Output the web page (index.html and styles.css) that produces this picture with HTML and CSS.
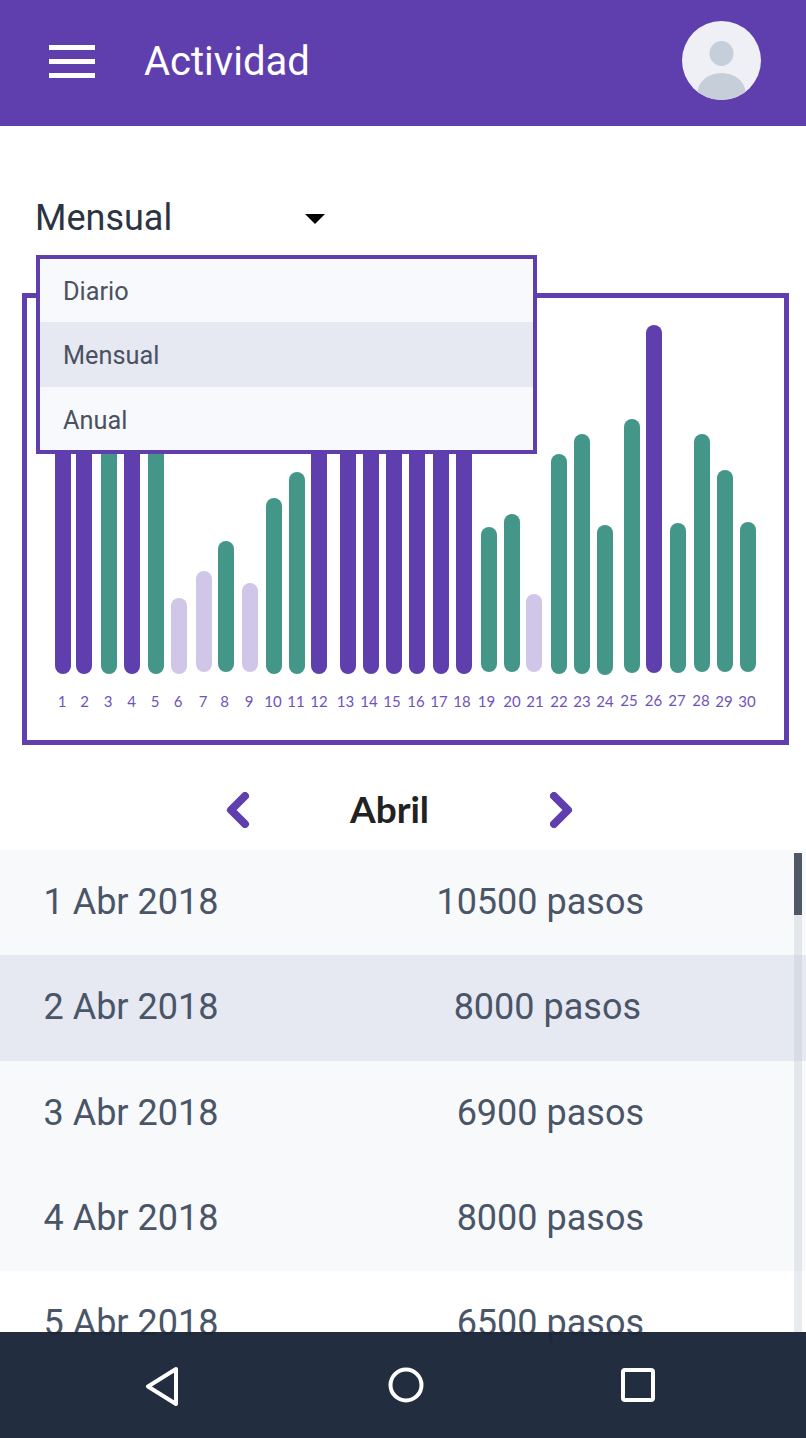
FILE: index.html
```html
<!DOCTYPE html>
<html lang="es">
<head>
  <meta charset="UTF-8">
  <title>Actividad</title>
  <meta name="viewport" content="width=device-width, initial-scale=1.0">
  <link rel="stylesheet" href="styles.css">
</head>
<body>

<div class="screen">
  <header class="topbar">
    <div class="menu-icon"><span></span><span></span><span></span></div>
    <h1 class="topbar-title">Actividad</h1>
    <svg class="avatar" width="79" height="79" viewBox="0 0 79 79">
      <clipPath id="avatarClip"><circle cx="39.5" cy="39.5" r="39.5"/></clipPath>
      <circle cx="39.5" cy="39.5" r="39.5" fill="#eef0f5"/>
      <g clip-path="url(#avatarClip)" fill="#c5ced9">
        <ellipse cx="39.5" cy="32.5" rx="12" ry="12.5"/>
        <ellipse cx="39.5" cy="72" rx="24" ry="20"/>
      </g>
    </svg>
  </header>

  <div class="period">
    <span class="period-value">Mensual</span>
    <span class="caret"></span>
    <ul class="period-menu">
      <li>Diario</li>
      <li class="selected">Mensual</li>
      <li>Anual</li>
    </ul>
  </div>

  <div class="chart">
    <svg class="chart-svg" width="757" height="442" viewBox="27 298 757 442">
      <g class="purple">
        <rect x="55" y="400" width="16" height="274" rx="8"/>
        <rect x="76" y="400" width="16" height="274" rx="8"/>
        <rect x="124" y="400" width="16" height="274" rx="8"/>
        <rect x="311" y="400" width="16" height="274" rx="8"/>
        <rect x="340" y="400" width="16" height="274" rx="8"/>
        <rect x="363" y="400" width="16" height="274" rx="8"/>
        <rect x="386" y="400" width="16" height="274" rx="8"/>
        <rect x="409" y="400" width="16" height="274" rx="8"/>
        <rect x="433" y="400" width="16" height="274" rx="8"/>
        <rect x="456" y="400" width="16" height="274" rx="8"/>
        <rect x="646" y="325" width="16" height="348" rx="8"/>
      </g>
      <g class="green">
        <rect x="101" y="400" width="16" height="274" rx="8"/>
        <rect x="148" y="400" width="16" height="274" rx="8"/>
        <rect x="218" y="541" width="16" height="131" rx="8"/>
        <rect x="266" y="498" width="16" height="176" rx="8"/>
        <rect x="289" y="472" width="16" height="202" rx="8"/>
        <rect x="481" y="527" width="16" height="145" rx="8"/>
        <rect x="504" y="514" width="16" height="158" rx="8"/>
        <rect x="551" y="454" width="16" height="220" rx="8"/>
        <rect x="574" y="434" width="16" height="240" rx="8"/>
        <rect x="597" y="525" width="16" height="150" rx="8"/>
        <rect x="624" y="419" width="16" height="254" rx="8"/>
        <rect x="670" y="523" width="16" height="150" rx="8"/>
        <rect x="694" y="434" width="16" height="238" rx="8"/>
        <rect x="717" y="470" width="16" height="202" rx="8"/>
        <rect x="740" y="522" width="16" height="150" rx="8"/>
      </g>
      <g class="pale">
        <rect x="171" y="598" width="16" height="76" rx="8"/>
        <rect x="196" y="571" width="16" height="101" rx="8"/>
        <rect x="242" y="583" width="16" height="89" rx="8"/>
        <rect x="526" y="594" width="16" height="78" rx="8"/>
      </g>
      <g class="days">
        <text x="62" y="707">1</text>
        <text x="84.5" y="707">2</text>
        <text x="108" y="707">3</text>
        <text x="131.5" y="707">4</text>
        <text x="155" y="707">5</text>
        <text x="178" y="707">6</text>
        <text x="203" y="707">7</text>
        <text x="224.5" y="707">8</text>
        <text x="249" y="707">9</text>
        <text x="273" y="707">10</text>
        <text x="296" y="707">11</text>
        <text x="319" y="707">12</text>
        <text x="345.5" y="707">13</text>
        <text x="369" y="707">14</text>
        <text x="392" y="707">15</text>
        <text x="416" y="707">16</text>
        <text x="439" y="707">17</text>
        <text x="462" y="707">18</text>
        <text x="486.5" y="707">19</text>
        <text x="512" y="707">20</text>
        <text x="535" y="707">21</text>
        <text x="559" y="707">22</text>
        <text x="582" y="707">23</text>
        <text x="605" y="707">24</text>
        <text x="629" y="706">25</text>
        <text x="653.5" y="706">26</text>
        <text x="677" y="706">27</text>
        <text x="701" y="706">28</text>
        <text x="724" y="707">29</text>
        <text x="747" y="707">30</text>
      </g>
    </svg>
  </div>

  <div class="month">
    <svg class="chevron" width="24" height="36" viewBox="0 0 24 36"><path d="M19 4 L5 18 L19 32"/></svg>
    <span class="month-name">Abril</span>
    <svg class="chevron" width="24" height="36" viewBox="0 0 24 36"><path d="M4 4 L18 18 L4 32"/></svg>
  </div>

  <div class="log">
    <div class="log-row tinted"><span>1 Abr 2018</span><span class="steps">10500 pasos</span></div>
    <div class="log-row selected"><span>2 Abr 2018</span><span class="steps steps-short">8000 pasos</span></div>
    <div class="log-row tinted"><span>3 Abr 2018</span><span class="steps">6900 pasos</span></div>
    <div class="log-row tinted"><span>4 Abr 2018</span><span class="steps">8000 pasos</span></div>
    <div class="log-row"><span>5 Abr 2018</span><span class="steps">6500 pasos</span></div>
    <div class="scrollbar"><div class="scrollbar-thumb"></div></div>
  </div>

  <nav class="android-nav">
    <svg class="nav-back" width="36" height="42" viewBox="0 0 36 42"><path d="M31 5 L3 22.5 L31 40 Z"/></svg>
    <svg class="nav-home" width="36" height="36" viewBox="0 0 36 36"><circle cx="18" cy="18" r="15.5"/></svg>
    <svg class="nav-recent" width="36" height="36" viewBox="0 0 36 36"><rect x="3" y="3" width="30" height="30" rx="2"/></svg>
  </nav>
</div>

</body>
</html>
```

FILE: styles.css
```css
* {
  box-sizing: border-box;
}
body {
  margin: 0;
  font-family: Roboto, sans-serif;
  background: white;
}
.screen {
  position: relative;
  width: 806px;
  height: 1438px;
  overflow: hidden;
}

.topbar {
  display: flex;
  align-items: center;
  height: 126px;
  padding: 0 45px 4px 49px;
  background: #5f3fae;
  color: white;
}
.menu-icon {
  display: flex;
  flex-direction: column;
  gap: 9px;
  width: 46px;
}
.menu-icon span {
  display: block;
  height: 5px;
  background: white;
}
.topbar-title {
  flex: 1;
  margin: 0 0 0 49px;
  font-size: 40px;
  font-weight: 400;
}
.avatar {
  margin-bottom: 1px;
}

.period {
  position: relative;
  height: 167px;
  padding-top: 70px;
}
.period-value {
  margin-left: 35px;
  font-size: 36px;
  line-height: 45px;
  color: #2a3442;
}
.caret {
  position: absolute;
  left: 305px;
  top: 88px;
  border-left: 10px solid transparent;
  border-right: 10px solid transparent;
  border-top: 10px solid black;
}
.period-menu {
  position: absolute;
  left: 36px;
  top: 129px;
  z-index: 2;
  width: 501px;
  margin: 0;
  padding: 0;
  list-style: none;
  border: 4px solid #5f3fae;
  background: #f8f9fc;
  font-size: 25.3px;
  color: #4a5160;
}
.period-menu li {
  height: 63px;
  padding-left: 23px;
  line-height: 67px;
}
.period-menu li:first-child {
  line-height: 65px;
}
.period-menu .selected {
  height: 65px;
  background: #e6e8f2;
}

.chart {
  width: 767px;
  height: 452px;
  margin-left: 22px;
  border: 5px solid #5f3fae;
}
.chart-svg {
  display: block;
}
.purple {
  fill: #5f3fae;
}
.green {
  fill: #439688;
}
.pale {
  fill: #d0c6e8;
}
.days {
  font-family: Lato, sans-serif;
  font-size: 15px;
  fill: #6f52bd;
  text-anchor: middle;
}

.month {
  display: flex;
  align-items: center;
  height: 105px;
  padding: 25px 0 0 226px;
}
.month-name {
  margin: 0 121px 3px 100px;
  font-family: Lato, sans-serif;
  font-size: 37px;
  font-weight: 700;
  color: #222;
}
.chevron path {
  fill: none;
  stroke: #5f3fae;
  stroke-width: 8;
  stroke-linecap: round;
  stroke-linejoin: round;
}

.log {
  position: relative;
  height: 600px;
}
.log-row {
  display: flex;
  justify-content: space-between;
  align-items: center;
  height: 105.3px;
  padding: 0 162px 1px 43.5px;
  font-size: 36px;
  color: #4a5568;
}
.tinted {
  background: #f8f9fb;
}
.log-row.selected {
  background: #e6e8f2;
}
.steps-short {
  margin-right: 3px;
}
.scrollbar {
  position: absolute;
  top: 3px;
  right: 4px;
  width: 8px;
  height: 495px;
  background: rgba(190, 198, 208, 0.35);
}
.scrollbar-thumb {
  height: 62px;
  background: #4e5866;
}

.android-nav {
  position: absolute;
  left: 0;
  bottom: 0;
  z-index: 3;
  display: flex;
  align-items: center;
  width: 100%;
  height: 106px;
  padding-left: 145px;
  background: rgba(27, 38, 57, 0.97);
}
.nav-home {
  margin-left: 207px;
}
.nav-recent {
  margin-left: 196px;
}
.android-nav svg * {
  fill: none;
  stroke: white;
  stroke-width: 4;
  stroke-linejoin: round;
}
```
